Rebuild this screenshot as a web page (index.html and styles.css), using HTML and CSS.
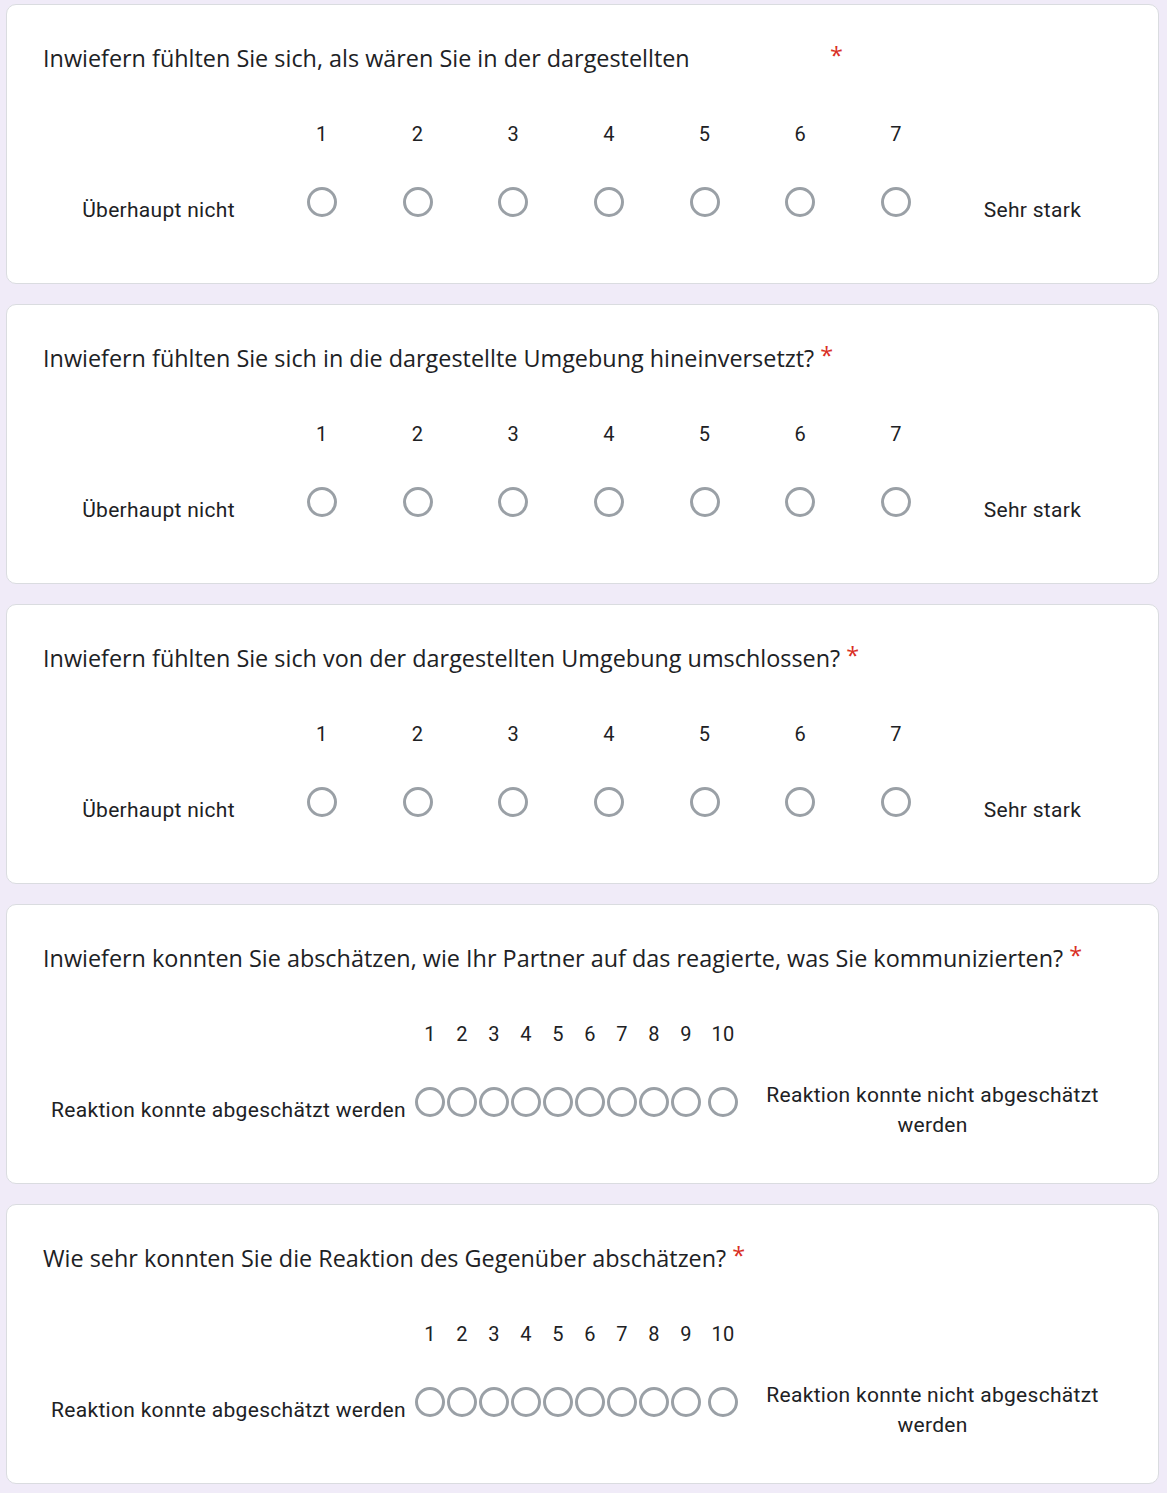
FILE: index.html
```html
<!DOCTYPE html>
<html lang="de">
<head>
<meta charset="utf-8">
<title>Fragebogen</title>
<link rel="stylesheet" href="styles.css">
</head>
<body>
<main class="form">
  <section class="card">
    <div class="title"><span class="title-text fixed">Inwiefern fühlten Sie sich, als wären Sie in der dargestellten</span><span class="req">*</span></div>
    <div class="scale scale7">
      <span class="num c1">1</span><span class="num c2">2</span><span class="num c3">3</span><span class="num c4">4</span><span class="num c5">5</span><span class="num c6">6</span><span class="num c7">7</span>
      <span class="label left">Überhaupt nicht</span>
      <span class="radio c1"></span><span class="radio c2"></span><span class="radio c3"></span><span class="radio c4"></span><span class="radio c5"></span><span class="radio c6"></span><span class="radio c7"></span>
      <span class="label right r7">Sehr stark</span>
    </div>
  </section>

  <section class="card">
    <div class="title"><span class="title-text">Inwiefern fühlten Sie sich in die dargestellte Umgebung hineinversetzt?</span> <span class="req">*</span></div>
    <div class="scale scale7">
      <span class="num c1">1</span><span class="num c2">2</span><span class="num c3">3</span><span class="num c4">4</span><span class="num c5">5</span><span class="num c6">6</span><span class="num c7">7</span>
      <span class="label left">Überhaupt nicht</span>
      <span class="radio c1"></span><span class="radio c2"></span><span class="radio c3"></span><span class="radio c4"></span><span class="radio c5"></span><span class="radio c6"></span><span class="radio c7"></span>
      <span class="label right r7">Sehr stark</span>
    </div>
  </section>

  <section class="card">
    <div class="title"><span class="title-text">Inwiefern fühlten Sie sich von der dargestellten Umgebung umschlossen?</span> <span class="req">*</span></div>
    <div class="scale scale7">
      <span class="num c1">1</span><span class="num c2">2</span><span class="num c3">3</span><span class="num c4">4</span><span class="num c5">5</span><span class="num c6">6</span><span class="num c7">7</span>
      <span class="label left">Überhaupt nicht</span>
      <span class="radio c1"></span><span class="radio c2"></span><span class="radio c3"></span><span class="radio c4"></span><span class="radio c5"></span><span class="radio c6"></span><span class="radio c7"></span>
      <span class="label right r7">Sehr stark</span>
    </div>
  </section>

  <section class="card">
    <div class="title"><span class="title-text">Inwiefern konnten Sie abschätzen, wie Ihr Partner auf das reagierte, was Sie kommunizierten?</span> <span class="req">*</span></div>
    <div class="scale scale10">
      <span class="num c1">1</span><span class="num c2">2</span><span class="num c3">3</span><span class="num c4">4</span><span class="num c5">5</span><span class="num c6">6</span><span class="num c7">7</span><span class="num c8">8</span><span class="num c9">9</span><span class="num c10">10</span>
      <span class="label left">Reaktion konnte abgeschätzt werden</span>
      <span class="radio c1"></span><span class="radio c2"></span><span class="radio c3"></span><span class="radio c4"></span><span class="radio c5"></span><span class="radio c6"></span><span class="radio c7"></span><span class="radio c8"></span><span class="radio c9"></span><span class="radio c10"></span>
      <span class="label right r10">Reaktion konnte nicht abgeschätzt werden</span>
    </div>
  </section>

  <section class="card">
    <div class="title"><span class="title-text">Wie sehr konnten Sie die Reaktion des Gegenüber abschätzen?</span> <span class="req">*</span></div>
    <div class="scale scale10">
      <span class="num c1">1</span><span class="num c2">2</span><span class="num c3">3</span><span class="num c4">4</span><span class="num c5">5</span><span class="num c6">6</span><span class="num c7">7</span><span class="num c8">8</span><span class="num c9">9</span><span class="num c10">10</span>
      <span class="label left">Reaktion konnte abgeschätzt werden</span>
      <span class="radio c1"></span><span class="radio c2"></span><span class="radio c3"></span><span class="radio c4"></span><span class="radio c5"></span><span class="radio c6"></span><span class="radio c7"></span><span class="radio c8"></span><span class="radio c9"></span><span class="radio c10"></span>
      <span class="label right r10">Reaktion konnte nicht abgeschätzt werden</span>
    </div>
  </section>
</main>
</body>
</html>
```

FILE: styles.css
```css
html, body {
  margin: 0;
  padding: 0;
  background: #f0ebf8;
}

.form {
  display: flex;
  flex-direction: column;
  gap: 20px;
  padding: 4px 8px 20px 6px;
}

.card {
  box-sizing: border-box;
  height: 280px;
  background: #ffffff;
  border: 1px solid #dadce0;
  border-radius: 10px;
  padding: 38px 37px 0 36px;
  color: #202124;
  font-family: Roboto, "Liberation Sans", Arial, sans-serif;
}

.title {
  font-family: "Open Sans", Roboto, "Liberation Sans", sans-serif;
  font-size: 23.4px;
  line-height: 30px;
  height: 30px;
  white-space: nowrap;
  color: #202124;
}

.title-text.fixed {
  display: inline-block;
  vertical-align: top;
  width: 787px;
}

.req {
  color: #d93025;
  position: relative;
  top: -3px;
}

.scale {
  display: grid;
  grid-template-rows: 30px 60px;
  row-gap: 31px;
  margin-top: 46px;
  font-size: 20px;
  letter-spacing: 0.3px;
  color: #202124;
}

.scale7 {
  grid-template-columns: 231px repeat(7, 95.7px) 1fr;
}

.scale10 {
  grid-template-columns: 371px repeat(9, 32px) 42px 1fr;
}

.num {
  grid-row: 1;
  text-align: center;
  line-height: 30px;
}

.radio {
  grid-row: 2;
  justify-self: center;
  align-self: center;
  box-sizing: border-box;
  width: 30px;
  height: 30px;
  border: 3px solid #9aa0a6;
  border-radius: 50%;
  margin-bottom: 16px;
}

.label {
  grid-row: 2;
  align-self: center;
  text-align: center;
  line-height: 30px;
  font-size: 21px;
}

.label.left { grid-column: 1; }
.label.r7 { grid-column: 9; }
.label.r10 { grid-column: 12; padding: 0 14px; }

.c1 { grid-column: 2; }
.c2 { grid-column: 3; }
.c3 { grid-column: 4; }
.c4 { grid-column: 5; }
.c5 { grid-column: 6; }
.c6 { grid-column: 7; }
.c7 { grid-column: 8; }
.c8 { grid-column: 9; }
.c9 { grid-column: 10; }
.c10 { grid-column: 11; }
```
